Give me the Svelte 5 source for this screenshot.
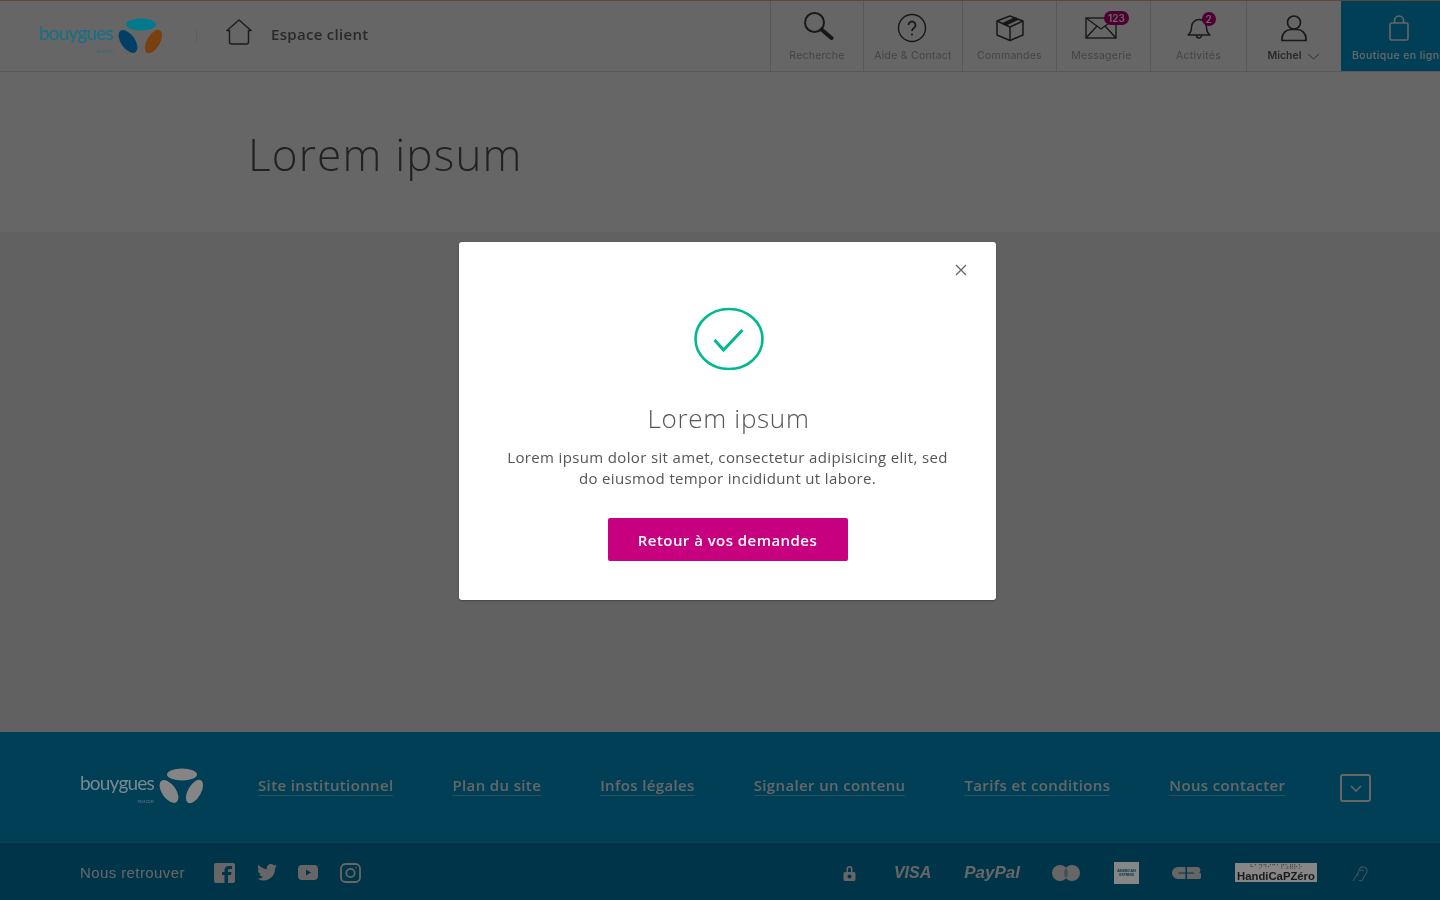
<script>
	const nav = [
		{ label: 'Recherche', w: 93, icon: 'search' },
		{ label: 'Aide & Contact', w: 99, icon: 'help' },
		{ label: 'Commandes', w: 94, icon: 'box' },
		{ label: 'Messagerie', w: 94, icon: 'mail', badge: '123' },
		{ label: 'Activités', w: 96, icon: 'bell', badge: '2' }
	];
	const links = [
		'Site institutionnel',
		'Plan du site',
		'Infos légales',
		'Signaler un contenu',
		'Tarifs et conditions',
		'Nous contacter'
	];
</script>

{#snippet petals(a, b, c)}
	<svg class="petals" viewBox="0 0 48 36" width="48" height="36">
		<ellipse cx="24" cy="6.500" rx="15" ry="6" fill={a} />
		<ellipse cx="11" cy="23.500" rx="7" ry="13" transform="rotate(-35 11 23.500)" fill={b} />
		<ellipse cx="36.500" cy="23.500" rx="6.500" ry="13" transform="rotate(30 36.500 23.500)" fill={c} />
	</svg>
{/snippet}

{#snippet navIcon(name)}
	{#if name === 'search'}
		<svg class="i-search" width="32" height="28" viewBox="0 0 32 28" fill="none" stroke="#3c3c3c" stroke-width="2">
			<circle cx="11.500" cy="10.500" r="9.500" />
			<path d="M18.500 17.500l10 8.500" stroke-width="4" stroke-linecap="round" />
		</svg>
	{:else if name === 'help'}
		<svg class="i-help" width="30" height="30" viewBox="0 0 30 30" fill="none" stroke="#3c3c3c" stroke-width="1.400">
			<circle cx="15" cy="15" r="13.500" />
			<path d="M11.500 12a3.500 3.500 0 1 1 5.400 3c-1.300.8-1.900 1.500-1.900 3" stroke-width="1.800" />
			<circle cx="15" cy="21.500" r="1.100" fill="#3c3c3c" stroke="none" />
		</svg>
	{:else if name === 'box'}
		<svg width="30" height="28" viewBox="0 0 30 28" fill="none" stroke="#3c3c3c" stroke-width="1.500" stroke-linejoin="round">
			<path d="M15 2l13 5v14l-13 5.500L2 21V7z" />
			<path d="M2 7l13 6 13-6M15 13v13.500" />
			<path d="M8 9.500l12-5.500 3 1.200-12 5.700z" fill="#3c3c3c" />
		</svg>
	{:else if name === 'mail'}
		<svg class="i-mail" width="32" height="22" viewBox="0 0 32 22" fill="none" stroke="#3c3c3c" stroke-width="1.400">
			<rect x="1" y="1" width="30" height="20" />
			<path d="M1 1l15 11L31 1M1 21l11-12M31 21L20 9" />
		</svg>
	{:else if name === 'bell'}
		<svg width="26" height="26" viewBox="0 0 26 26" fill="none" stroke="#3c3c3c" stroke-width="1.500" stroke-linejoin="round">
			<path d="M2 20c3-2 3.500-4 3.500-8a7.500 7.500 0 0 1 15 0c0 4 .5 6 3.500 8z" />
			<path d="M10.500 20.500a2.500 2.500 0 0 0 5 0" />
		</svg>
	{/if}
{/snippet}

<div class="page">
	<header>
		<div class="brand">
			<div class="logo">
				<span class="wordmark">bouygues<small>TELECOM</small></span>
				{@render petals('#007a8c', '#003f66', '#7a3f0f')}
			</div>
			<span class="sep"></span>
			<svg class="home" width="26" height="26" viewBox="0 0 26 26" fill="none" stroke="#4a4a4a" stroke-width="1.500" stroke-linejoin="round">
				<path d="M1 11.500L13 1l12 10.500h-2.500V23a2 2 0 0 1-2 2h-15a2 2 0 0 1-2-2V11.500z" />
			</svg>
			<span class="space">Espace client</span>
		</div>
		<nav>
			{#each nav as item}
				<a class="cell" style="width:{item.w}px">
					<span class="ico">
						{@render navIcon(item.icon)}
						{#if item.badge}<b class="badge" class:one={item.badge.length === 1}>{item.badge}</b>{/if}
					</span>
					<span class="lbl" class:tuck={item.icon === 'mail'}>{item.label}</span>
				</a>
			{/each}
			<a class="cell user">
				<span class="ico">
					<svg width="28" height="28" viewBox="0 0 28 28" fill="none" stroke="#3c3c3c" stroke-width="1.700">
						<circle cx="14" cy="8.500" r="6.500" />
						<path d="M2 26.500v-2c0-5 4-9 9-9h6c5 0 9 4 9 9v2z" stroke-linejoin="round" />
					</svg>
				</span>
				<span class="lbl me">Michel
					<svg width="13" height="7" viewBox="0 0 13 7" fill="none" stroke="#777" stroke-width="1"><path d="M1 1l5.500 5L12 1" /></svg>
				</span>
			</a>
			<a class="cell shop">
				<span class="ico">
					<svg width="20" height="26" viewBox="0 0 20 26" fill="none" stroke="#fff" stroke-width="1.600">
						<rect x="1" y="8" width="18" height="17" rx="1.500" />
						<path d="M5.500 8V5.500a4.500 4.500 0 0 1 9 0V8" />
					</svg>
				</span>
				<span class="lbl">Boutique en ligne</span>
			</a>
		</nav>
	</header>

	<section class="title">
		<h1>Lorem ipsum</h1>
	</section>
	<main></main>

	<footer>
		<div class="links">
			<div class="logo foot">
				<span class="wordmark">bouygues<small>TELECOM</small></span>
				{@render petals('#858585', '#858585', '#858585')}
			</div>
			<ul>
				{#each links as link}
					<li><a>{link}</a></li>
				{/each}
			</ul>
			<button class="more" aria-label="Plus">
				<svg width="12" height="7" viewBox="0 0 12 7" fill="none" stroke="#fff" stroke-width="1.500"><path d="M1 1l5 5 5-5" /></svg>
			</button>
		</div>
		<div class="legal">
			<span class="follow">Nous retrouver</span>
			<div class="social">
				<svg width="21" height="20" viewBox="0 0 21 20"><path fill="#fff" d="M2 0h17a2 2 0 0 1 2 2v16a2 2 0 0 1-2 2h-5v-8h3l.5-3H14V7.500c0-1 .5-1.500 1.500-1.500H18V3h-3c-3 0-4.500 1.500-4.500 4.500V9H8v3h2.500v8H2a2 2 0 0 1-2-2V2a2 2 0 0 1 2-2z" /></svg>
				<svg width="20" height="17" viewBox="0 0 20 17"><path fill="#fff" d="M20 2c-.8.400-1.500.5-2.300.6.800-.5 1.500-1.200 1.800-2.200-.8.500-1.700.800-2.600 1A4.100 4.100 0 0 0 9.900 5.200C6.500 5 3.400 3.400 1.400.800.300 2.700.900 5 2.700 6.300c-.7 0-1.300-.2-1.900-.5 0 2 1.500 3.800 3.300 4.200-.6.100-1.200.2-1.800.1.500 1.600 2 2.800 3.800 2.800A8.300 8.300 0 0 1 0 14.600 11.700 11.700 0 0 0 18 4.200c.8-.6 1.500-1.300 2-2.200z" /></svg>
				<svg width="20" height="15" viewBox="0 0 20 15"><rect width="20" height="15" rx="4" fill="#fff" /><path d="M8 4.500v6l5-3z" fill="#0082b7" /></svg>
				<svg width="21" height="20" viewBox="0 0 21 20" fill="none" stroke="#fff" stroke-width="1.800"><rect x="1" y="1" width="19" height="18" rx="4.500" /><circle cx="10.500" cy="10" r="4.200" /><circle cx="16" cy="4.700" r=".8" fill="#fff" stroke="none" /></svg>
			</div>
			<div class="pay">
				<svg class="lock" width="13" height="16" viewBox="0 0 12 16"><path fill="#fff" fill-rule="evenodd" d="M3 7V4a3 3 0 0 1 6 0v3h1.500A1.500 1.500 0 0 1 12 8.500v6a1.500 1.500 0 0 1-1.500 1.500h-9A1.500 1.500 0 0 1 0 14.500v-6A1.500 1.500 0 0 1 1.500 7zm1.500 0h3V4a1.500 1.500 0 0 0-3 0zM6 9.500a2 2 0 1 0 0 4 2 2 0 0 0 0-4z" /></svg>
				<span class="visa">VISA</span>
				<span class="paypal">PayPal</span>
				<svg class="mc" width="28" height="16" viewBox="0 0 28 16"><circle cx="8" cy="8" r="8" fill="#fff" /><circle cx="20" cy="8" r="8" fill="#fff" /><path d="M14 2.800a8 8 0 0 1 0 10.400 8 8 0 0 1 0-10.400z" fill="#9cc" /></svg>
				<span class="amex"><i>AMERICAN</i><i>EXPRESS</i></span>
				<svg class="cb" width="29" height="12" viewBox="0 0 29 12"><path fill="#fff" d="M6 0h7.500v5.500H6.500v1h7V12H6A6 6 0 0 1 6 0zM15 0h10.500a3 3 0 0 1 1.500 5.500 3.200 3.200 0 0 1-1.500 6.500H15V6.500h7v-1h-7z" /></svg>
				<span class="handi"><em>⠓⠁⠝⠙⠊⠉⠁⠏⠵⠿⠗⠕</em>HandiCaPZéro</span>
				<svg class="ear" width="16" height="18" viewBox="0 0 16 18" fill="none" stroke="#fff" stroke-width="1.100"><path d="M5 12c2-3 1-4 2.500-7a4 4 0 0 1 7.500 2c0 4-3.500 4-4 8-.3 2-3 2.500-4 1M8 7a2 2 0 0 1 3.500 0M1 17L6 9" /></svg>
			</div>
		</div>
	</footer>

	<div class="overlay">
		<div class="modal">
			<button class="close" aria-label="Fermer">
				<svg width="12" height="12" viewBox="0 0 12 12" fill="none" stroke="#666" stroke-width="1.300"><path d="M1 1l10 10M11 1L1 11" /></svg>
			</button>
			<svg class="ok" width="70" height="63" viewBox="0 0 70 63" fill="none" stroke="#00b98e" stroke-width="2.600">
				<ellipse cx="35" cy="32" rx="33.500" ry="30" />
				<path d="M20.500 33l9 10 19-20" stroke-width="3" />
			</svg>
			<h2>Lorem ipsum</h2>
			<p>Lorem ipsum dolor sit amet, consectetur adipisicing elit, sed<br />do eiusmod tempor incididunt ut labore.</p>
			<button class="back">Retour à vos demandes</button>
		</div>
	</div>
</div>

<style>
	:global(body) {
		background: #fff;
	}
	.page {
		position: relative;
		height: 900px;
		overflow: hidden;
		font-family: 'Open Sans', sans-serif;
		filter: blur(0.7px);
	}
	a {
		color: inherit;
		text-decoration: none;
	}
	header {
		height: 72px;
		box-sizing: border-box;
		display: flex;
		justify-content: space-between;
		background: #fff;
		border-top: 1px solid #e8b48a;
		border-bottom: 1px solid #dcdcdc;
	}
	.brand {
		display: flex;
		align-items: center;
		padding-left: 39px;
	}
	.logo {
		position: relative;
		z-index: 2;
		display: flex;
		align-items: center;
		width: 126px;
		height: 36px;
	}
	.wordmark {
		position: relative;
		font-family: Lato, sans-serif;
		font-size: 19px;
		font-weight: 400;
		letter-spacing: -0.8px;
		color: #127088;
		width: 78px;
		flex: none;
		margin-top: -6px;
		line-height: 20px;
	}
	.wordmark small {
		position: absolute;
		right: 4px;
		top: 19px;
		font-size: 3px;
		letter-spacing: 0.4px;
	}
	.petals {
		flex: none;
	}
	.sep {
		width: 1px;
		height: 14px;
		background: #e8e8e8;
		margin: 0 29px 0 31px;
	}
	.home {
		margin-top: -8px;
	}
	.space {
		margin: -4px 0 0 19px;
		font-size: 15px;
		font-weight: 600;
		letter-spacing: 0.3px;
		color: #666;
	}
	nav {
		display: flex;
	}
	.cell {
		height: 70px;
		box-sizing: border-box;
		flex: none;
		display: flex;
		flex-direction: column;
		align-items: center;
		border-left: 1px solid #ddd;
		font-family: Inter, sans-serif;
	}
	.ico {
		position: relative;
		height: 48px;
		display: flex;
		align-items: center;
		justify-content: center;
		padding-top: 6px;
		box-sizing: border-box;
	}
	.i-search {
		margin: -5px 0 0 3px;
	}
	.i-help {
		margin: -1px 2px 0 0;
	}
	.i-mail {
		margin-right: 5px;
	}
	.lbl {
		font-size: 10.500px;
		line-height: 14px;
		letter-spacing: 0.25px;
		color: #aaa;
		white-space: nowrap;
	}
	.tuck {
		margin-right: 4px;
	}
	.badge {
		position: absolute;
		top: 10px;
		left: 19px;
		height: 14px;
		min-width: 14px;
		padding: 0 4px;
		box-sizing: border-box;
		border-radius: 7px;
		background: #c6007e;
		color: #fff;
		font-size: 10px;
		line-height: 14px;
		font-weight: 600;
		text-align: center;
	}
	.badge.one {
		top: 11px;
		left: 16px;
		padding: 0;
	}
	.user {
		width: 95px;
	}
	.me {
		color: #666;
		font-weight: 600;
		display: flex;
		align-items: center;
		gap: 6px;
		letter-spacing: 0;
	}
	.shop {
		width: 99px;
		background: #009ed4;
		border-left: 0;
		overflow: hidden;
		align-items: flex-start;
		padding-left: 11px;
	}
	.shop .ico {
		width: 94px;
	}
	.shop .lbl {
		color: #fff;
		font-weight: 500;
		letter-spacing: 0.4px;
	}
	.title {
		height: 160px;
		background: #fff;
		box-sizing: border-box;
		padding: 52px 0 0 248px;
	}
	h1 {
		margin: 0;
		font-size: 44px;
		line-height: 60px;
		font-weight: 300;
		letter-spacing: 1.200px;
		color: #555;
	}
	main {
		height: 500px;
		background: #f3f3f3;
	}
	footer {
		height: 168px;
		background: #009ed4;
		color: #fff;
	}
	.links {
		height: 111px;
		box-sizing: border-box;
		border-bottom: 1px solid #1aa8d8;
		padding: 0 69px 0 80px;
		display: flex;
		align-items: center;
	}
	.foot {
		margin-top: -2px;
	}
	.foot .wordmark {
		color: #7a8a90;
	}
	ul {
		list-style: none;
		margin: -3px 0 0 52px;
		padding: 0;
		display: flex;
		gap: 59px;
		flex: 1;
		font-size: 15px;
		font-weight: 600;
		letter-spacing: 0.36px;
	}
	li a {
		display: block;
		line-height: 20px;
		border-bottom: 1px solid rgba(255, 255, 255, 0.4);
	}
	.more {
		width: 31px;
		height: 28px;
		margin-top: 2px;
		padding: 0;
		background: none;
		border: 2px solid #fff;
		border-radius: 3px;
		display: flex;
		align-items: center;
		justify-content: center;
	}
	.legal {
		height: 57px;
		box-sizing: border-box;
		padding: 2px 72px 0 80px;
		background: #0082b7;
		display: flex;
		align-items: center;
	}
	.follow {
		font-family: 'Liberation Sans', sans-serif;
		font-size: 15px;
		letter-spacing: 0.4px;
		width: 134px;
	}
	.social {
		display: flex;
		align-items: center;
		gap: 21.500px;
	}
	.pay {
		margin-left: auto;
		display: flex;
		align-items: center;
	}
	.visa {
		margin-left: 38px;
		font: italic 700 16px 'Liberation Sans', sans-serif;
	}
	.paypal {
		margin-left: 33px;
		font: italic 700 17px 'Liberation Sans', sans-serif;
	}
	.mc {
		margin-left: 32px;
	}
	.amex {
		position: relative;
		z-index: 2;
		margin-left: 34px;
		width: 25px;
		height: 22px;
		background: #868686;
		color: #003449;
		display: flex;
		flex-direction: column;
		justify-content: center;
		align-items: center;
		font-size: 3.500px;
		line-height: 4px;
		font-weight: 700;
	}
	.amex i {
		font-style: normal;
	}
	.cb {
		margin-left: 33px;
	}
	.handi {
		position: relative;
		z-index: 2;
		margin-left: 34px;
		width: 82px;
		height: 19px;
		background: #868686;
		color: #1a1a1a;
		display: flex;
		flex-direction: column;
		align-items: center;
		font: 700 11.300px/10px 'Liberation Sans', sans-serif;
	}
	.handi em {
		font: normal 6px/8px 'DejaVu Sans', sans-serif;
		height: 8px;
		overflow: hidden;
	}
	.ear {
		margin-left: 35px;
		opacity: 0.6;
	}
	.overlay {
		position: absolute;
		z-index: 1;
		inset: 0;
		background: rgba(0, 0, 0, 0.6);
		display: flex;
		justify-content: center;
		align-items: flex-start;
		padding: 242px 0 0 15px;
		box-sizing: border-box;
	}
	.modal {
		position: relative;
		width: 537px;
		height: 358px;
		box-sizing: border-box;
		background: #fff;
		border-radius: 3px;
		box-shadow: 0 1px 2px rgba(0, 0, 0, 0.3);
		padding-top: 65px;
		display: flex;
		flex-direction: column;
		align-items: center;
		text-align: center;
	}
	.close {
		position: absolute;
		top: 22px;
		right: 29px;
		padding: 0;
		background: none;
		border: 0;
		line-height: 0;
	}
	.ok {
		margin-left: 2px;
	}
	h2 {
		margin: 30px 0 0 2px;
		font-size: 26px;
		line-height: 36px;
		font-weight: 300;
		letter-spacing: 0.7px;
		color: #555;
	}
	p {
		margin: 11px 0 0 0;
		font-size: 15px;
		line-height: 20.500px;
		letter-spacing: 0.35px;
		color: #555;
	}
	.back {
		margin-top: 30px;
		width: 240px;
		height: 43px;
		border: 0;
		border-radius: 2px;
		background: #c6007e;
		color: #fff;
		font-family: inherit;
		font-size: 15px;
		font-weight: 600;
		letter-spacing: 0.45px;
	}
</style>
